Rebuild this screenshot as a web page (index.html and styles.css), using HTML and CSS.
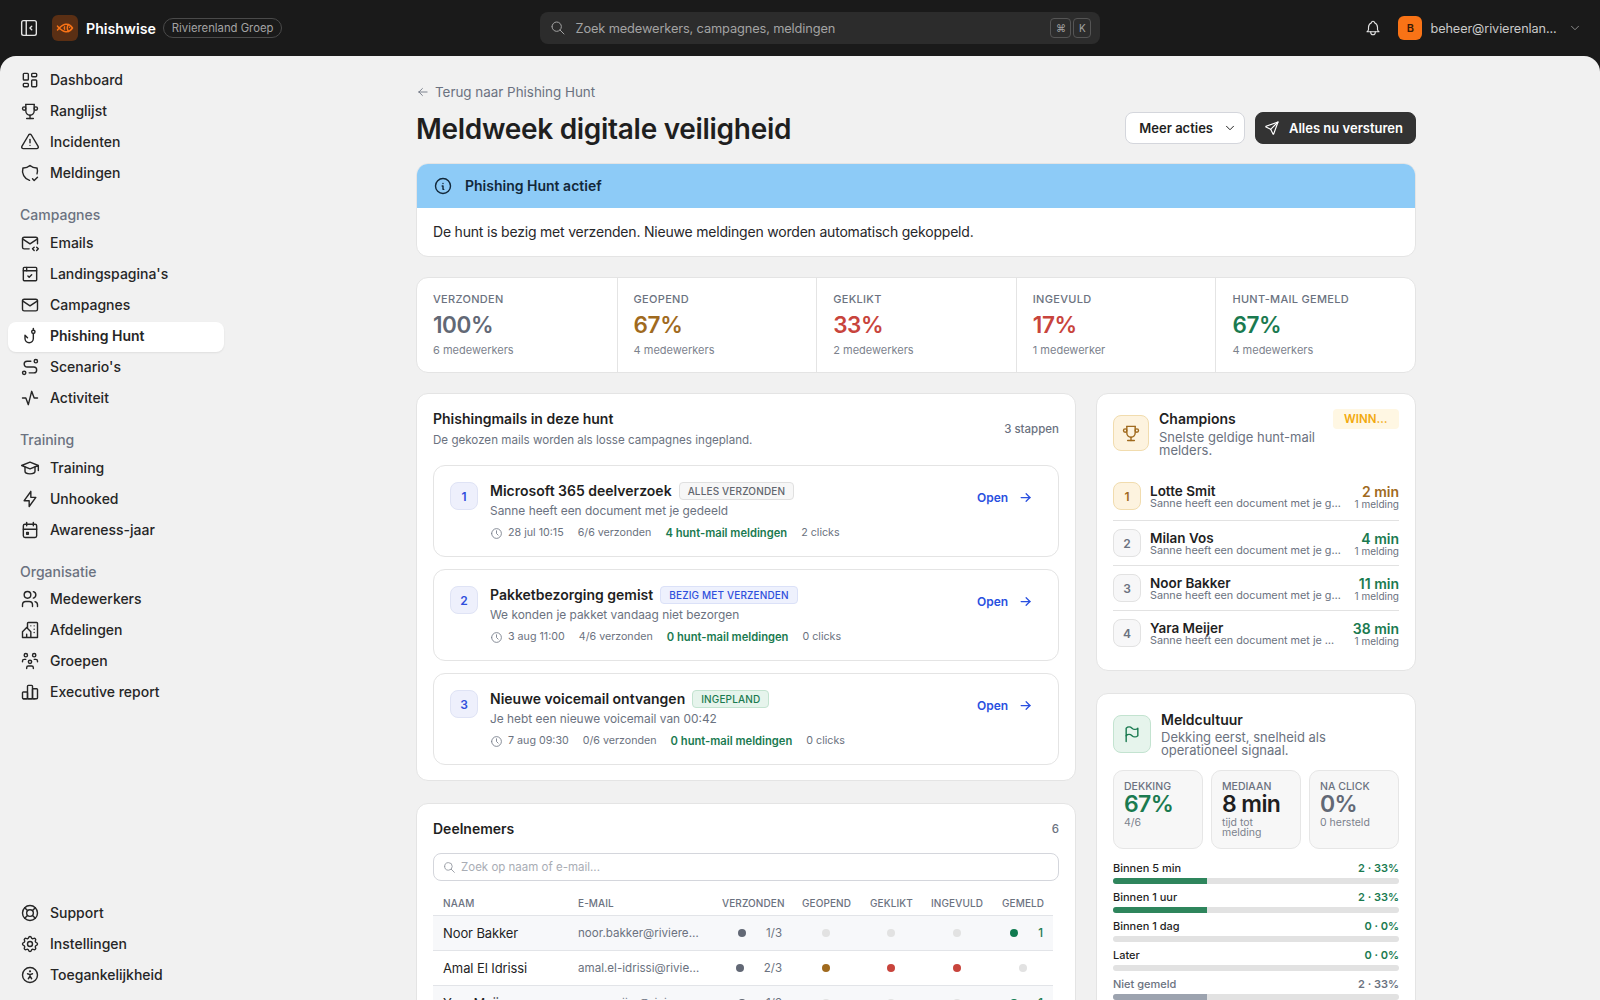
FILE: index.html
```html
<!DOCTYPE HTML>
<html>
	<head>
		<meta http-equiv="Content-Type" content="text/html; charset=utf-8">
		<title>Phishwise</title>
		<link rel="stylesheet" href="styles.css">
	</head>
	<body>
		<svg class="defs" xmlns="http://www.w3.org/2000/svg">
			<symbol id="i_collapse" viewBox="0 0 24 24"><path d="M4 6a2 2 0 0 1 2 -2h12a2 2 0 0 1 2 2v12a2 2 0 0 1 -2 2h-12a2 2 0 0 1 -2 -2z"/><path d="M9 4v16"/><path d="M15 10l-2 2l2 2"/></symbol>
			<symbol id="i_fish" viewBox="0 0 24 24"><path d="M16.69 7.44a6.973 6.973 0 0 0 -1.69 4.56c0 1.747 .64 3.345 1.699 4.571"/><path d="M2 9.504c7.715 8.647 14.75 10.265 20 2.498c-5.25 -7.761 -12.285 -6.142 -20 2.504"/><path d="M18 11v.01"/><path d="M11.5 10.5c-.667 1 -.667 2 0 3"/></symbol>
			<symbol id="i_dashboard" viewBox="0 0 24 24"><path d="M5 4h4a1 1 0 0 1 1 1v6a1 1 0 0 1 -1 1h-4a1 1 0 0 1 -1 -1v-6a1 1 0 0 1 1 -1"/><path d="M5 16h4a1 1 0 0 1 1 1v2a1 1 0 0 1 -1 1h-4a1 1 0 0 1 -1 -1v-2a1 1 0 0 1 1 -1"/><path d="M15 12h4a1 1 0 0 1 1 1v6a1 1 0 0 1 -1 1h-4a1 1 0 0 1 -1 -1v-6a1 1 0 0 1 1 -1"/><path d="M15 4h4a1 1 0 0 1 1 1v2a1 1 0 0 1 -1 1h-4a1 1 0 0 1 -1 -1v-2a1 1 0 0 1 1 -1"/></symbol>
			<symbol id="i_trophy" viewBox="0 0 24 24"><path d="M8 21h8"/><path d="M12 17v4"/><path d="M7 4h10"/><path d="M17 4v8a5 5 0 0 1 -10 0v-8"/><path d="M3 9a2 2 0 1 0 4 0a2 2 0 1 0 -4 0"/><path d="M17 9a2 2 0 1 0 4 0a2 2 0 1 0 -4 0"/></symbol>
			<symbol id="i_alert" viewBox="0 0 24 24"><path d="M12 9v4"/><path d="M10.363 3.591l-8.106 13.534a1.914 1.914 0 0 0 1.636 2.871h16.214a1.914 1.914 0 0 0 1.636 -2.87l-8.106 -13.536a1.914 1.914 0 0 0 -3.274 0z"/><path d="M12 16h.01"/></symbol>
			<symbol id="i_shield" viewBox="0 0 24 24"><path d="M11.46 20.846a12 12 0 0 1 -7.96 -14.846a12 12 0 0 0 8.5 -3a12 12 0 0 0 8.5 3a12 12 0 0 1 -.09 7.06"/><path d="M15 19l2 2l4 -4"/></symbol>
			<symbol id="i_mail_code" viewBox="0 0 24 24"><path d="M11 19h-6a2 2 0 0 1 -2 -2v-10a2 2 0 0 1 2 -2h14a2 2 0 0 1 2 2v6"/><path d="M3 7l9 6l9 -6"/><path d="M20 21l2 -2l-2 -2"/><path d="M17 17l-2 2l2 2"/></symbol>
			<symbol id="i_browser" viewBox="0 0 24 24"><path d="M4 5a1 1 0 0 1 1 -1h14a1 1 0 0 1 1 1v14a1 1 0 0 1 -1 1h-14a1 1 0 0 1 -1 -1z"/><path d="M4 8h16"/><path d="M8 4v4"/><path d="M9.5 14.5l1.5 1.5l3 -3"/></symbol>
			<symbol id="i_mail" viewBox="0 0 24 24"><path d="M3 7a2 2 0 0 1 2 -2h14a2 2 0 0 1 2 2v10a2 2 0 0 1 -2 2h-14a2 2 0 0 1 -2 -2v-10z"/><path d="M3 7l9 6l9 -6"/></symbol>
			<symbol id="i_hook" viewBox="0 0 24 24"><path d="M16 9v6a5 5 0 0 1 -10 0v-4l3 3"/><path d="M14 7a2 2 0 1 0 4 0a2 2 0 1 0 -4 0"/><path d="M16 5v-2"/></symbol>
			<symbol id="i_route" viewBox="0 0 24 24"><path d="M3 19a2 2 0 1 0 4 0a2 2 0 0 0 -4 0"/><path d="M19 7a2 2 0 1 0 0 -4a2 2 0 0 0 0 4z"/><path d="M11 19h5.5a3.5 3.5 0 0 0 0 -7h-8a3.5 3.5 0 0 1 0 -7h4.5"/></symbol>
			<symbol id="i_activity" viewBox="0 0 24 24"><path d="M3 12h4l3 8l4 -16l3 8h4"/></symbol>
			<symbol id="i_school" viewBox="0 0 24 24"><path d="M22 9l-10 -4l-10 4l10 4l10 -4v6"/><path d="M6 10.6v5.4a6 3 0 0 0 12 0v-5.4"/></symbol>
			<symbol id="i_bolt" viewBox="0 0 24 24"><path d="M13 3v7h6l-8 11v-7h-6l8 -11"/></symbol>
			<symbol id="i_calendar" viewBox="0 0 24 24"><path d="M4 7a2 2 0 0 1 2 -2h12a2 2 0 0 1 2 2v12a2 2 0 0 1 -2 2h-12a2 2 0 0 1 -2 -2z"/><path d="M16 3v4"/><path d="M8 3v4"/><path d="M4 11h16"/><path d="M8 15h2v2h-2z"/></symbol>
			<symbol id="i_users" viewBox="0 0 24 24"><path d="M5 7a4 4 0 1 0 8 0a4 4 0 1 0 -8 0"/><path d="M3 21v-2a4 4 0 0 1 4 -4h4a4 4 0 0 1 4 4v2"/><path d="M16 3.13a4 4 0 0 1 0 7.75"/><path d="M21 21v-2a4 4 0 0 0 -3 -3.85"/></symbol>
			<symbol id="i_building" viewBox="0 0 24 24"><path d="M8 9l5 5v7h-5v-4m0 4h-5v-7l5 -5m1 1v-6a1 1 0 0 1 1 -1h10a1 1 0 0 1 1 1v17h-8"/><path d="M13 7v.01"/><path d="M17 7v.01"/><path d="M17 11v.01"/><path d="M17 15v.01"/></symbol>
			<symbol id="i_group" viewBox="0 0 24 24"><path d="M10 13a2 2 0 1 0 4 0a2 2 0 0 0 -4 0"/><path d="M8 21v-1a2 2 0 0 1 2 -2h4a2 2 0 0 1 2 2v1"/><path d="M15 5a2 2 0 1 0 4 0a2 2 0 0 0 -4 0"/><path d="M17 10h2a2 2 0 0 1 2 2v1"/><path d="M5 5a2 2 0 1 0 4 0a2 2 0 0 0 -4 0"/><path d="M3 13v-1a2 2 0 0 1 2 -2h2"/></symbol>
			<symbol id="i_chart" viewBox="0 0 24 24"><path d="M3 13a1 1 0 0 1 1 -1h4a1 1 0 0 1 1 1v6a1 1 0 0 1 -1 1h-4a1 1 0 0 1 -1 -1z"/><path d="M15 9a1 1 0 0 1 1 -1h4a1 1 0 0 1 1 1v10a1 1 0 0 1 -1 1h-4a1 1 0 0 1 -1 -1z"/><path d="M9 5a1 1 0 0 1 1 -1h4a1 1 0 0 1 1 1v14a1 1 0 0 1 -1 1h-4a1 1 0 0 1 -1 -1z"/><path d="M4 20h14"/></symbol>
			<symbol id="i_lifebuoy" viewBox="0 0 24 24"><path d="M8 12a4 4 0 1 0 8 0a4 4 0 1 0 -8 0"/><path d="M3 12a9 9 0 1 0 18 0a9 9 0 1 0 -18 0"/><path d="M15 15l3.35 3.35"/><path d="M9 15l-3.35 3.35"/><path d="M5.65 5.65l3.35 3.35"/><path d="M18.35 5.65l-3.35 3.35"/></symbol>
			<symbol id="i_settings" viewBox="0 0 24 24"><path d="M10.325 4.317c.426 -1.756 2.924 -1.756 3.35 0a1.724 1.724 0 0 0 2.573 1.066c1.543 -.94 3.31 .826 2.37 2.37a1.724 1.724 0 0 0 1.065 2.572c1.756 .426 1.756 2.924 0 3.35a1.724 1.724 0 0 0 -1.066 2.573c.94 1.543 -.826 3.31 -2.37 2.37a1.724 1.724 0 0 0 -2.572 1.065c-.426 1.756 -2.924 1.756 -3.35 0a1.724 1.724 0 0 0 -2.573 -1.066c-1.543 .94 -3.31 -.826 -2.37 -2.37a1.724 1.724 0 0 0 -1.065 -2.572c-1.756 -.426 -1.756 -2.924 0 -3.35a1.724 1.724 0 0 0 1.066 -2.573c-.94 -1.543 .826 -3.31 2.37 -2.37c1 .608 2.296 .07 2.572 -1.065z"/><path d="M9 12a3 3 0 1 0 6 0a3 3 0 0 0 -6 0"/></symbol>
			<symbol id="i_access" viewBox="0 0 24 24"><path d="M3 12a9 9 0 1 0 18 0a9 9 0 1 0 -18 0"/><path d="M10 16.5l2 -3l2 3m-2 -3v-2l3 -1m-6 0l3 1"/><path d="M11.5 7.5a.5 .5 0 1 0 1 0a.5 .5 0 1 0 -1 0"/></symbol>
			<symbol id="i_search" viewBox="0 0 24 24"><path d="M3 10a7 7 0 1 0 14 0a7 7 0 1 0 -14 0"/><path d="M21 21l-6 -6"/></symbol>
			<symbol id="i_bell" viewBox="0 0 24 24"><path d="M10 5a2 2 0 1 1 4 0a7 7 0 0 1 4 6v3a4 4 0 0 0 2 3h-16a4 4 0 0 0 2 -3v-3a7 7 0 0 1 4 -6"/><path d="M9 17v1a3 3 0 0 0 6 0v-1"/></symbol>
			<symbol id="i_chevron" viewBox="0 0 24 24"><path d="M6 9l6 6l6 -6"/></symbol>
			<symbol id="i_send" viewBox="0 0 24 24"><path d="M10 14l11 -11"/><path d="M21 3l-6.5 18a.55 .55 0 0 1 -1 0l-3.5 -7l-7 -3.5a.55 .55 0 0 1 0 -1l18 -6.5"/></symbol>
			<symbol id="i_info" viewBox="0 0 24 24"><path d="M3 12a9 9 0 1 0 18 0a9 9 0 0 0 -18 0"/><path d="M12 9h.01"/><path d="M11 12h1v4h1"/></symbol>
			<symbol id="i_clock" viewBox="0 0 24 24"><path d="M3 12a9 9 0 1 0 18 0a9 9 0 0 0 -18 0"/><path d="M12 7v5l3 3"/></symbol>
			<symbol id="i_right" viewBox="0 0 24 24"><path d="M5 12h14"/><path d="M13 18l6 -6"/><path d="M13 6l6 6"/></symbol>
			<symbol id="i_left" viewBox="0 0 24 24"><path d="M5 12h14"/><path d="M5 12l6 6"/><path d="M5 12l6 -6"/></symbol>
			<symbol id="i_flag" viewBox="0 0 24 24"><path d="M5 5a5 5 0 0 1 7 0a5 5 0 0 0 7 0v9a5 5 0 0 1 -7 0a5 5 0 0 0 -7 0v-9z"/><path d="M5 21v-7"/></symbol>
		</svg>

		<div class="app">
			<header class="topbar">
				<svg class="icon toggle_icon"><use href="#i_collapse"/></svg>
				<div class="logo"><svg class="icon"><use href="#i_fish"/></svg></div>
				<strong class="brand">Phishwise</strong>
				<span class="tenant">Rivierenland Groep</span>
				<div class="global_search">
					<svg class="icon"><use href="#i_search"/></svg>
					<span class="global_search_text">Zoek medewerkers, campagnes, meldingen</span>
					<kbd>⌘</kbd><kbd class="kbd_k">K</kbd>
				</div>
				<svg class="icon bell_icon"><use href="#i_bell"/></svg>
				<div class="avatar">B</div>
				<span class="user_mail">beheer@rivierenlan...</span>
				<svg class="icon user_chevron"><use href="#i_chevron"/></svg>
			</header>

			<div class="shell">
				<nav class="sidebar">
					<a class="nav_item"><svg class="icon"><use href="#i_dashboard"/></svg>Dashboard</a>
					<a class="nav_item"><svg class="icon"><use href="#i_trophy"/></svg>Ranglijst</a>
					<a class="nav_item"><svg class="icon"><use href="#i_alert"/></svg>Incidenten</a>
					<a class="nav_item"><svg class="icon"><use href="#i_shield"/></svg>Meldingen</a>
					<div class="nav_label">Campagnes</div>
					<a class="nav_item"><svg class="icon"><use href="#i_mail_code"/></svg>Emails</a>
					<a class="nav_item"><svg class="icon"><use href="#i_browser"/></svg>Landingspagina's</a>
					<a class="nav_item"><svg class="icon"><use href="#i_mail"/></svg>Campagnes</a>
					<a class="nav_item active"><svg class="icon"><use href="#i_hook"/></svg>Phishing Hunt</a>
					<a class="nav_item"><svg class="icon"><use href="#i_route"/></svg>Scenario's</a>
					<a class="nav_item"><svg class="icon"><use href="#i_activity"/></svg>Activiteit</a>
					<div class="nav_label">Training</div>
					<a class="nav_item"><svg class="icon"><use href="#i_school"/></svg>Training</a>
					<a class="nav_item"><svg class="icon"><use href="#i_bolt"/></svg>Unhooked</a>
					<a class="nav_item"><svg class="icon"><use href="#i_calendar"/></svg>Awareness-jaar</a>
					<div class="nav_label nav_label_tight">Organisatie</div>
					<a class="nav_item"><svg class="icon"><use href="#i_users"/></svg>Medewerkers</a>
					<a class="nav_item"><svg class="icon"><use href="#i_building"/></svg>Afdelingen</a>
					<a class="nav_item"><svg class="icon"><use href="#i_group"/></svg>Groepen</a>
					<a class="nav_item"><svg class="icon"><use href="#i_chart"/></svg>Executive report</a>
					<div class="nav_bottom">
						<a class="nav_item"><svg class="icon"><use href="#i_lifebuoy"/></svg>Support</a>
						<a class="nav_item"><svg class="icon"><use href="#i_settings"/></svg>Instellingen</a>
						<a class="nav_item"><svg class="icon"><use href="#i_access"/></svg>Toegankelijkheid</a>
					</div>
				</nav>

				<main class="main">
					<div class="page">
						<a class="back_link"><svg class="icon"><use href="#i_left"/></svg>Terug naar Phishing Hunt</a>
						<div class="page_head">
							<h1>Meldweek digitale veiligheid</h1>
							<div class="page_actions">
								<button class="btn">Meer acties<svg class="icon"><use href="#i_chevron"/></svg></button>
								<button class="btn btn_dark"><svg class="icon"><use href="#i_send"/></svg>Alles nu versturen</button>
							</div>
						</div>

						<section class="alert_card">
							<div class="alert_head"><svg class="icon"><use href="#i_info"/></svg>Phishing Hunt actief</div>
							<div class="alert_body">De hunt is bezig met verzenden. Nieuwe meldingen worden automatisch gekoppeld.</div>
						</section>

						<section class="stats">
							<div class="stat"><div class="stat_label">Verzonden</div><div class="stat_value c_gray">100%</div><div class="stat_note">6 medewerkers</div></div>
							<div class="stat"><div class="stat_label">Geopend</div><div class="stat_value c_amber">67%</div><div class="stat_note">4 medewerkers</div></div>
							<div class="stat"><div class="stat_label">Geklikt</div><div class="stat_value c_red">33%</div><div class="stat_note">2 medewerkers</div></div>
							<div class="stat"><div class="stat_label">Ingevuld</div><div class="stat_value c_red">17%</div><div class="stat_note">1 medewerker</div></div>
							<div class="stat"><div class="stat_label">Hunt-mail gemeld</div><div class="stat_value c_green">67%</div><div class="stat_note">4 medewerkers</div></div>
						</section>

						<div class="columns">
							<div class="col">
								<section class="card">
									<div class="card_head">
										<div>
											<h2>Phishingmails in deze hunt</h2>
											<p class="card_sub">De gekozen mails worden als losse campagnes ingepland.</p>
										</div>
										<span class="card_count">3 stappen</span>
									</div>
									<div class="steps">
										<div class="step">
											<div class="step_num">1</div>
											<div class="step_body">
												<div class="step_title">Microsoft 365 deelverzoek <span class="tag tag_gray">Alles verzonden</span></div>
												<div class="step_sub">Sanne heeft een document met je gedeeld</div>
												<div class="step_meta"><span class="meta_time"><svg class="icon"><use href="#i_clock"/></svg>28 jul 10:15</span><span>6/6 verzonden</span><b>4 hunt-mail meldingen</b><span>2 clicks</span></div>
											</div>
											<a class="step_open">Open<svg class="icon"><use href="#i_right"/></svg></a>
										</div>
										<div class="step">
											<div class="step_num">2</div>
											<div class="step_body">
												<div class="step_title">Pakketbezorging gemist <span class="tag tag_blue">Bezig met verzenden</span></div>
												<div class="step_sub">We konden je pakket vandaag niet bezorgen</div>
												<div class="step_meta"><span class="meta_time"><svg class="icon"><use href="#i_clock"/></svg>3 aug 11:00</span><span>4/6 verzonden</span><b>0 hunt-mail meldingen</b><span>0 clicks</span></div>
											</div>
											<a class="step_open">Open<svg class="icon"><use href="#i_right"/></svg></a>
										</div>
										<div class="step">
											<div class="step_num">3</div>
											<div class="step_body">
												<div class="step_title">Nieuwe voicemail ontvangen <span class="tag tag_green">Ingepland</span></div>
												<div class="step_sub">Je hebt een nieuwe voicemail van 00:42</div>
												<div class="step_meta"><span class="meta_time"><svg class="icon"><use href="#i_clock"/></svg>7 aug 09:30</span><span>0/6 verzonden</span><b>0 hunt-mail meldingen</b><span>0 clicks</span></div>
											</div>
											<a class="step_open">Open<svg class="icon"><use href="#i_right"/></svg></a>
										</div>
									</div>
								</section>

								<section class="card">
									<div class="people_head"><h2>Deelnemers</h2><span class="card_count">6</span></div>
									<div class="people_search"><svg class="icon"><use href="#i_search"/></svg>Zoek op naam of e-mail...</div>
									<table class="people">
										<colgroup><col class="w_name"><col class="w_mail"><col class="w_sent"><col class="w_open"><col class="w_click"><col class="w_fill"><col class="w_report"></colgroup>
										<thead>
											<tr><th class="left">Naam</th><th class="left">E-mail</th><th>Verzonden</th><th>Geopend</th><th>Geklikt</th><th>Ingevuld</th><th>Gemeld</th></tr>
										</thead>
										<tbody>
											<tr>
												<td class="p_name">Noor Bakker</td><td class="p_mail">noor.bakker@rivierenland.nl</td>
												<td><div class="pair"><i class="dot d_gray"></i><span>1/3</span></div></td>
												<td><i class="dot"></i></td><td><i class="dot"></i></td><td><i class="dot"></i></td>
												<td><div class="pair pair_green"><i class="dot d_green"></i><span>1</span></div></td>
											</tr>
											<tr>
												<td class="p_name">Amal El Idrissi</td><td class="p_mail">amal.el-idrissi@rivierenland.nl</td>
												<td><div class="pair"><i class="dot d_gray"></i><span>2/3</span></div></td>
												<td><i class="dot d_amber"></i></td><td><i class="dot d_red"></i></td><td><i class="dot d_red"></i></td>
												<td><i class="dot"></i></td>
											</tr>
											<tr>
												<td class="p_name">Yara Meijer</td><td class="p_mail">yara.meijer@rivierenland.nl</td>
												<td><div class="pair"><i class="dot d_gray"></i><span>1/3</span></div></td>
												<td><i class="dot"></i></td><td><i class="dot"></i></td><td><i class="dot"></i></td>
												<td><div class="pair pair_green"><i class="dot d_green"></i><span>1</span></div></td>
											</tr>
										</tbody>
									</table>
								</section>
							</div>

							<div class="col">
								<section class="card">
									<div class="side_head side_head_champs">
										<div class="side_icon side_amber"><svg class="icon"><use href="#i_trophy"/></svg></div>
										<div class="side_text">
											<h2>Champions</h2>
											<p>Snelste geldige hunt-mail melders.</p>
										</div>
										<span class="chip">WINNAAR</span>
									</div>
									<div class="champs">
										<div class="champ">
											<div class="rank rank_first">1</div>
											<div class="champ_who"><b>Lotte Smit</b><span>Sanne heeft een document met je gedeeld</span></div>
											<div class="champ_time"><b class="c_amber">2 min</b><span>1 melding</span></div>
										</div>
										<div class="champ">
											<div class="rank">2</div>
											<div class="champ_who"><b>Milan Vos</b><span>Sanne heeft een document met je gedeeld</span></div>
											<div class="champ_time"><b class="c_green">4 min</b><span>1 melding</span></div>
										</div>
										<div class="champ">
											<div class="rank">3</div>
											<div class="champ_who"><b>Noor Bakker</b><span>Sanne heeft een document met je gedeeld</span></div>
											<div class="champ_time"><b class="c_green">11 min</b><span>1 melding</span></div>
										</div>
										<div class="champ">
											<div class="rank">4</div>
											<div class="champ_who"><b>Yara Meijer</b><span>Sanne heeft een document met je gedeeld</span></div>
											<div class="champ_time"><b class="c_green">38 min</b><span>1 melding</span></div>
										</div>
									</div>
								</section>

								<section class="card">
									<div class="side_head side_head_meld">
										<div class="side_icon side_green"><svg class="icon"><use href="#i_flag"/></svg></div>
										<div class="side_text">
											<h2>Meldcultuur</h2>
											<p>Dekking eerst, snelheid als operationeel signaal.</p>
										</div>
									</div>
									<div class="minis">
										<div class="mini"><div class="mini_label">Dekking</div><div class="mini_value c_green">67%</div><div class="mini_note">4/6</div></div>
										<div class="mini"><div class="mini_label">Mediaan</div><div class="mini_value">8 min</div><div class="mini_note">tijd tot melding</div></div>
										<div class="mini"><div class="mini_label">Na click</div><div class="mini_value c_gray">0%</div><div class="mini_note">0 hersteld</div></div>
									</div>
									<div class="bar_row"><div class="bar_text"><span>Binnen 5 min</span><b>2 · 33%</b></div><div class="bar"><div class="bar_fill" style="width:33%"></div></div></div>
									<div class="bar_row"><div class="bar_text"><span>Binnen 1 uur</span><b>2 · 33%</b></div><div class="bar"><div class="bar_fill" style="width:33%"></div></div></div>
									<div class="bar_row"><div class="bar_text"><span>Binnen 1 dag</span><b>0 · 0%</b></div><div class="bar"><div class="bar_fill" style="width:0%"></div></div></div>
									<div class="bar_row"><div class="bar_text"><span>Later</span><b>0 · 0%</b></div><div class="bar"><div class="bar_fill" style="width:0%"></div></div></div>
									<div class="bar_row bar_muted"><div class="bar_text"><span>Niet gemeld</span><b>2 · 33%</b></div><div class="bar"><div class="bar_fill" style="width:33%"></div></div></div>
								</section>
							</div>
						</div>
					</div>
				</main>
			</div>
		</div>
	</body>
</html>
```

FILE: styles.css
```css
*{box-sizing:border-box;}
html,body{margin:0;height:100%;}
body{font-family:"Inter","Liberation Sans",sans-serif;font-size:14px;color:#1f1f1f;background:#1a1a1a;overflow:hidden;}
h1,h2,p{margin:0;}
.defs{display:none;}
.icon{width:20px;height:20px;flex:none;fill:none;stroke:currentColor;stroke-width:1.7;stroke-linecap:round;stroke-linejoin:round;}
.app{height:100vh;display:flex;flex-direction:column;}
.c_gray{color:#626875;}
.c_amber{color:#a06a1e;}
.c_red{color:#c8443c;}
.c_green{color:#1a7a50;}

/* top bar */
.topbar{height:56px;flex:none;display:flex;align-items:center;padding-left:18px;color:#fff;}
.toggle_icon{width:22px;height:22px;color:#e5e5e5;stroke-width:1.5;}
.logo{width:26px;height:26px;margin-left:12px;border-radius:6px;background:#5a2f14;color:#f97316;display:flex;align-items:center;justify-content:center;}
.logo .icon{width:18px;height:18px;stroke-width:2;}
.brand{margin-left:8px;font-size:14.2px;font-weight:600;}
.tenant{margin-left:7px;height:20px;line-height:18px;padding:0 8px;border:1px solid #4a4a4a;border-radius:10px;color:#a3a3a3;font-size:11.3px;}
.global_search{width:560px;height:32px;margin-left:258px;padding:0 9px 0 10px;border-radius:8px;background:#2c2c2c;color:#a3a3a3;display:flex;align-items:center;gap:2px;}
.global_search .icon{width:16px;height:16px;stroke-width:1.5;}
.global_search_text{flex:1;margin-left:7px;font-size:12.8px;letter-spacing:-.12px;}
kbd{width:21px;height:20px;border:1px solid #555;border-radius:4px;font:10px "Inter",sans-serif;display:flex;align-items:center;justify-content:center;color:#a3a3a3;}
.kbd_k{width:18px;}
.bell_icon{margin-left:264px;width:18px;height:18px;color:#e5e5e5;stroke-width:1.5;}
.avatar{margin-left:16px;width:24px;height:24px;border-radius:6px;background:#f97316;color:#3a1a05;font-size:11px;font-weight:600;display:flex;align-items:center;justify-content:center;}
.user_mail{margin-left:8px;width:128px;font-size:12.7px;letter-spacing:-.1px;color:#c9c9c9;white-space:nowrap;}
.user_chevron{margin-left:10px;width:14px;height:14px;color:#8a8a8a;}

/* shell */
.shell{flex:1;min-height:0;display:flex;background:#f1f1f1;border-radius:16px 16px 0 0;overflow:hidden;}
.sidebar{width:232px;flex:none;padding:10px 8px 9px;display:flex;flex-direction:column;gap:1px;}
.nav_item{height:30px;padding:0 0 3px 12px;border-radius:8px;display:flex;align-items:center;gap:10px;font-size:14px;font-weight:500;color:#262626;}
.nav_item.active{background:#fff;font-weight:600;box-shadow:0 1px 2px rgba(0,0,0,.08);}
.nav_label{height:20px;margin:15px 0 3px 12px;line-height:20px;font-size:14px;font-weight:500;color:#6b7280;}
.nav_label_tight{margin-bottom:2px;}
.nav_bottom{margin-top:auto;display:flex;flex-direction:column;gap:1px;}

/* page */
.main{flex:1;min-width:0;overflow:hidden;display:flex;justify-content:center;}
.page{width:1000px;flex:none;padding-top:26px;}
.back_link{height:20px;display:flex;align-items:center;gap:5px;color:#6b7280;font-size:13.4px;}
.back_link .icon{width:14px;height:14px;stroke-width:1.5;}
.page_head{margin-top:10px;height:32px;display:flex;align-items:center;justify-content:space-between;}
h1{font-size:28px;font-weight:600;letter-spacing:-.3px;position:relative;top:1px;}
.page_actions{display:flex;gap:10px;}
.btn{height:32px;padding:0 7px 0 13px;border:1px solid #d4d6dc;border-radius:8px;background:#fff;color:#1f1f1f;font:600 13px "Inter",sans-serif;display:flex;align-items:center;gap:10px;}
.btn .icon{width:14px;height:14px;}
.btn_dark{background:#333;border-color:#333;color:#fff;padding:0 12px 0 8px;gap:9px;}
.btn_dark .icon{width:16px;height:16px;}

.alert_card{margin-top:19px;border:1px solid #e4e4e4;border-radius:12px;background:#fff;overflow:hidden;}
.alert_head{height:45px;margin:-1px -1px 0;padding-left:17px;background:#8dcbf7;color:#12283a;font-weight:600;display:flex;align-items:center;gap:12px;}
.alert_body{height:48px;line-height:48px;padding-left:16px;font-size:14px;letter-spacing:-.2px;color:#27272a;}

.stats{margin-top:20px;height:96px;display:grid;grid-template-columns:repeat(5,1fr);border:1px solid #e4e4e4;border-radius:12px;background:#fff;}
.stat{padding:13px 16px;border-left:1px solid #e4e4e4;}
.stat:first-child{border-left:0;}
.stat_label{font-size:11px;line-height:16px;font-weight:500;letter-spacing:.3px;text-transform:uppercase;color:#6b7280;}
.stat_value{font-size:22.5px;line-height:35px;font-weight:600;letter-spacing:-.4px;}
.stat_note{font-size:11px;line-height:16px;color:#7c828d;}

.columns{margin-top:20px;display:grid;grid-template-columns:660px 320px;gap:20px;}
.col{display:flex;flex-direction:column;gap:22px;}
.card{padding:15px 16px;border:1px solid #e4e4e4;border-radius:12px;background:#fff;}
h2{font-size:14px;line-height:20px;font-weight:600;}
.card_sub{margin-top:2px;font-size:11.6px;line-height:18px;color:#6b7280;}
.card_head{display:flex;align-items:center;justify-content:space-between;}
.card_count{font-size:11.5px;font-weight:500;color:#6b7280;}

/* steps */
.steps{margin-top:16px;display:flex;flex-direction:column;gap:12px;}
.step{height:92px;padding:16px;border:1px solid #e4e4e4;border-radius:12px;display:flex;}
.step_num{width:28px;height:28px;flex:none;border:1px solid #dfe3f5;border-radius:8px;background:#eef0fc;color:#2f4fdc;font-size:12px;font-weight:600;display:flex;align-items:center;justify-content:center;}
.step_body{flex:1;margin-left:12px;min-width:0;}
.step_title{height:18px;line-height:18px;font-size:14px;font-weight:600;display:flex;align-items:center;gap:7px;}
.tag{height:18px;padding:0 8px;border:1px solid;border-radius:4px;font-size:10px;line-height:16px;font-weight:500;letter-spacing:.15px;text-transform:uppercase;}
.tag_gray{background:#f7f7f7;border-color:#e0e0e0;color:#62666e;}
.tag_blue{background:#eef1fd;border-color:#dbe1f8;color:#2f4fdc;}
.tag_green{background:#e6f4ec;border-color:#c3e3d0;color:#1a7a50;}
.step_sub{margin-top:2px;font-size:11.9px;line-height:18px;color:#6b7280;}
.step_meta{margin-top:4px;line-height:18px;display:flex;align-items:center;gap:14px;font-size:10.7px;color:#6b7280;}
.step_meta b{font-size:11.2px;font-weight:600;color:#1a7a50;}
.meta_time{display:flex;align-items:center;gap:5px;}
.meta_time .icon{width:13px;height:13px;stroke-width:1.5;}
.step_open{height:30px;width:56px;flex:none;margin-right:9px;display:flex;align-items:center;justify-content:space-between;color:#2a50e0;font-size:12px;font-weight:600;}
.step_open .icon{width:15px;height:15px;stroke-width:2;}

/* deelnemers */
.people_head{display:flex;align-items:center;justify-content:space-between;}
.people_search{margin-top:14px;height:28px;padding-left:9px;border:1px solid #d4d6dc;border-radius:8px;color:#a9adb5;font-size:11.5px;display:flex;align-items:center;gap:5px;}
.people_search .icon{width:13px;height:13px;color:#8a8f98;stroke-width:1.5;}
.people{width:620px;table-layout:fixed;border-collapse:collapse;}
.w_name{width:135px;}
.w_mail{width:144px;}
.w_sent{width:80px;}
.w_open{width:68px;}
.w_click{width:61px;}
.w_fill{width:71px;}
.w_report{width:61px;}
.people th{height:34px;padding:0 10px 6px;vertical-align:bottom;font-size:10px;font-weight:500;letter-spacing:.1px;text-transform:uppercase;text-align:center;color:#6b7280;white-space:nowrap;border-bottom:1px solid #e2e4e8;}
.people th.left{text-align:left;}
.people td{height:35px;padding:0 10px;text-align:center;border-bottom:1px solid #e2e4e8;font-size:11.5px;color:#6b7280;}
.people tbody tr:nth-child(odd){background:#f7f8fa;}
.people td.p_name{text-align:left;font-size:13px;letter-spacing:-.1px;color:#1f1f1f;white-space:nowrap;}
.people td.p_mail{text-align:left;font-size:11.6px;white-space:nowrap;overflow:hidden;text-overflow:ellipsis;}
.dot{display:inline-block;width:8px;height:8px;border-radius:50%;background:#e2e2e2;vertical-align:middle;}
.d_gray{background:#626875;}
.d_amber{background:#a06a1e;}
.d_red{background:#c8443c;}
.d_green{background:#0f7a4f;}
.pair{display:flex;align-items:center;justify-content:flex-end;gap:20px;}
.pair_green{color:#1a7a50;font-weight:500;}

/* rechterkolom */
.side_head{display:flex;align-items:center;gap:10px;}
.side_icon{width:36px;height:36px;flex:none;border:1px solid;border-radius:8px;display:flex;align-items:center;justify-content:center;}
.side_amber{background:#fdf3df;border-color:#f1dcae;color:#a06a1e;}
.side_green{width:38px;height:38px;background:#e6f4ec;border-color:#c3e3d0;color:#1a7a50;}
.side_text{flex:1;min-width:0;}
.side_text p{margin-top:2px;font-size:13px;line-height:13px;color:#6b7280;}
.side_text h2{line-height:19px;}
.side_head_champs .side_text p{margin-top:3px;}
.side_head_meld{margin-top:1px;}
.chip{align-self:flex-start;width:66px;height:20px;flex:none;padding:0 11px;border-radius:4px;background:#fff7e3;color:#f2a90c;font-size:11.5px;line-height:20px;font-weight:600;overflow:hidden;white-space:nowrap;text-overflow:ellipsis;}
.champs{margin-top:17px;}
.champ{padding:8px 0;display:flex;align-items:center;gap:9px;border-bottom:1px solid #e2e2e2;}
.champ:first-child{padding-bottom:10px;}
.champ:last-child{border-bottom:0;}
.rank{width:28px;height:28px;flex:none;border:1px solid #e2e2e2;border-radius:8px;background:#f7f7f8;color:#6b7280;font-size:12px;font-weight:600;display:flex;align-items:center;justify-content:center;}
.rank_first{background:#fdf3df;border-color:#f1dcae;color:#a06a1e;}
.champ_who{flex:1;min-width:0;display:flex;flex-direction:column;}
.champ_who b{font-size:13.5px;line-height:14px;font-weight:600;}
.champ_who span{font-size:10.8px;line-height:11px;color:#6b7280;white-space:nowrap;overflow:hidden;text-overflow:ellipsis;}
.champ_time{flex:none;display:flex;flex-direction:column;align-items:flex-end;margin-left:3px;}
.champ_time b{font-size:14px;line-height:15px;font-weight:600;}
.champ_time span{font-size:10px;line-height:10px;color:#6b7280;}

.minis{margin-top:13px;display:grid;grid-template-columns:repeat(3,90px);gap:8px;}
.mini{height:79px;padding:9px 10px 8px;border:1px solid #e6e6e6;border-radius:10px;background:#f7f7f7;}
.mini_label{font-size:10.5px;line-height:14px;font-weight:500;text-transform:uppercase;color:#6b7280;}
.mini_value{font-size:23px;line-height:21px;font-weight:600;letter-spacing:-.6px;}
.mini_note{margin-top:3px;font-size:10.5px;line-height:10px;color:#7c828d;}
.bar_row{margin-top:7px;height:22px;}
.minis + .bar_row{margin-top:13px;}
.bar_text{height:12px;line-height:12px;display:flex;justify-content:space-between;font-size:11px;font-weight:500;}
.bar_text b{font-weight:600;color:#1a7a50;}
.bar{margin-top:4px;height:6px;border-radius:3px;background:#e2e2e2;overflow:hidden;}
.bar_fill{height:100%;background:#2e855c;}
.bar_muted .bar_text,.bar_muted .bar_text b{color:#6b7280;}
.bar_muted .bar_fill{background:#9ca3af;}
```
